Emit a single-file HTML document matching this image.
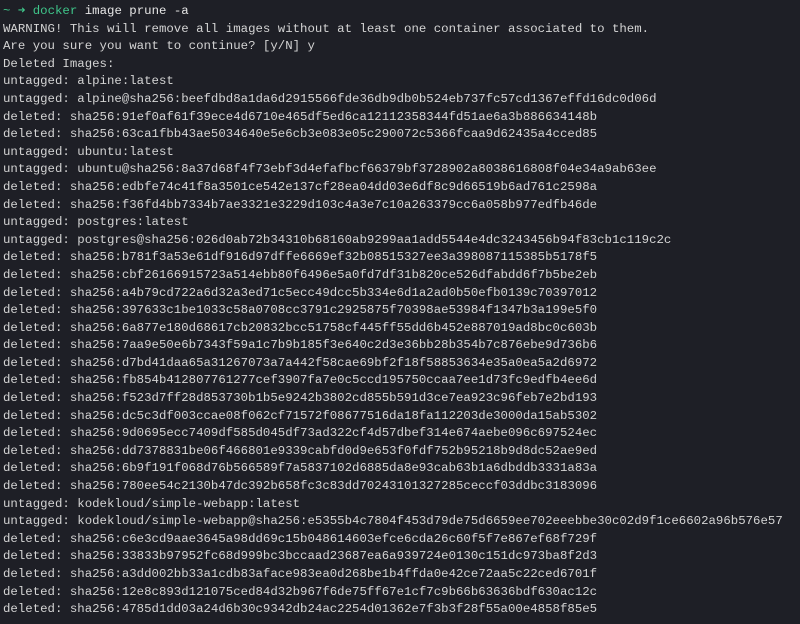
<!DOCTYPE html>
<html><head><meta charset="utf-8"><style>
html,body{margin:0;padding:0;background:#1e1f26;width:800px;height:624px;overflow:hidden}
pre{margin:0;padding:3px 0 0 3px;font-family:"Liberation Mono",monospace;font-size:12.38px;line-height:17.6px;color:#d4d4d4;white-space:pre}
.g{color:#3fc58a}.w{color:#e6e6e6}
</style></head><body><pre><span class="g">~ ➜ docker</span> <span class="w">image prune -a</span>
WARNING! This will remove all images without at least one container associated to them.
Are you sure you want to continue? [y/N] y
Deleted Images:
untagged: alpine:latest
untagged: alpine@sha256:beefdbd8a1da6d2915566fde36db9db0b524eb737fc57cd1367effd16dc0d06d
deleted: sha256:91ef0af61f39ece4d6710e465df5ed6ca12112358344fd51ae6a3b886634148b
deleted: sha256:63ca1fbb43ae5034640e5e6cb3e083e05c290072c5366fcaa9d62435a4cced85
untagged: ubuntu:latest
untagged: ubuntu@sha256:8a37d68f4f73ebf3d4efafbcf66379bf3728902a8038616808f04e34a9ab63ee
deleted: sha256:edbfe74c41f8a3501ce542e137cf28ea04dd03e6df8c9d66519b6ad761c2598a
deleted: sha256:f36fd4bb7334b7ae3321e3229d103c4a3e7c10a263379cc6a058b977edfb46de
untagged: postgres:latest
untagged: postgres@sha256:026d0ab72b34310b68160ab9299aa1add5544e4dc3243456b94f83cb1c119c2c
deleted: sha256:b781f3a53e61df916d97dffe6669ef32b08515327ee3a398087115385b5178f5
deleted: sha256:cbf26166915723a514ebb80f6496e5a0fd7df31b820ce526dfabdd6f7b5be2eb
deleted: sha256:a4b79cd722a6d32a3ed71c5ecc49dcc5b334e6d1a2ad0b50efb0139c70397012
deleted: sha256:397633c1be1033c58a0708cc3791c2925875f70398ae53984f1347b3a199e5f0
deleted: sha256:6a877e180d68617cb20832bcc51758cf445ff55dd6b452e887019ad8bc0c603b
deleted: sha256:7aa9e50e6b7343f59a1c7b9b185f3e640c2d3e36bb28b354b7c876ebe9d736b6
deleted: sha256:d7bd41daa65a31267073a7a442f58cae69bf2f18f58853634e35a0ea5a2d6972
deleted: sha256:fb854b412807761277cef3907fa7e0c5ccd195750ccaa7ee1d73fc9edfb4ee6d
deleted: sha256:f523d7ff28d853730b1b5e9242b3802cd855b591d3ce7ea923c96feb7e2bd193
deleted: sha256:dc5c3df003ccae08f062cf71572f08677516da18fa112203de3000da15ab5302
deleted: sha256:9d0695ecc7409df585d045df73ad322cf4d57dbef314e674aebe096c697524ec
deleted: sha256:dd7378831be06f466801e9339cabfd0d9e653f0fdf752b95218b9d8dc52ae9ed
deleted: sha256:6b9f191f068d76b566589f7a5837102d6885da8e93cab63b1a6dbddb3331a83a
deleted: sha256:780ee54c2130b47dc392b658fc3c83dd70243101327285ceccf03ddbc3183096
untagged: kodekloud/simple-webapp:latest
untagged: kodekloud/simple-webapp@sha256:e5355b4c7804f453d79de75d6659ee702eeebbe30c02d9f1ce6602a96b576e57
deleted: sha256:c6e3cd9aae3645a98dd69c15b048614603efce6cda26c60f5f7e867ef68f729f
deleted: sha256:33833b97952fc68d999bc3bccaad23687ea6a939724e0130c151dc973ba8f2d3
deleted: sha256:a3dd002bb33a1cdb83aface983ea0d268be1b4ffda0e42ce72aa5c22ced6701f
deleted: sha256:12e8c893d121075ced84d32b967f6de75ff67e1cf7c9b66b63636bdf630ac12c
deleted: sha256:4785d1dd03a24d6b30c9342db24ac2254d01362e7f3b3f28f55a00e4858f85e5</pre></body></html>
